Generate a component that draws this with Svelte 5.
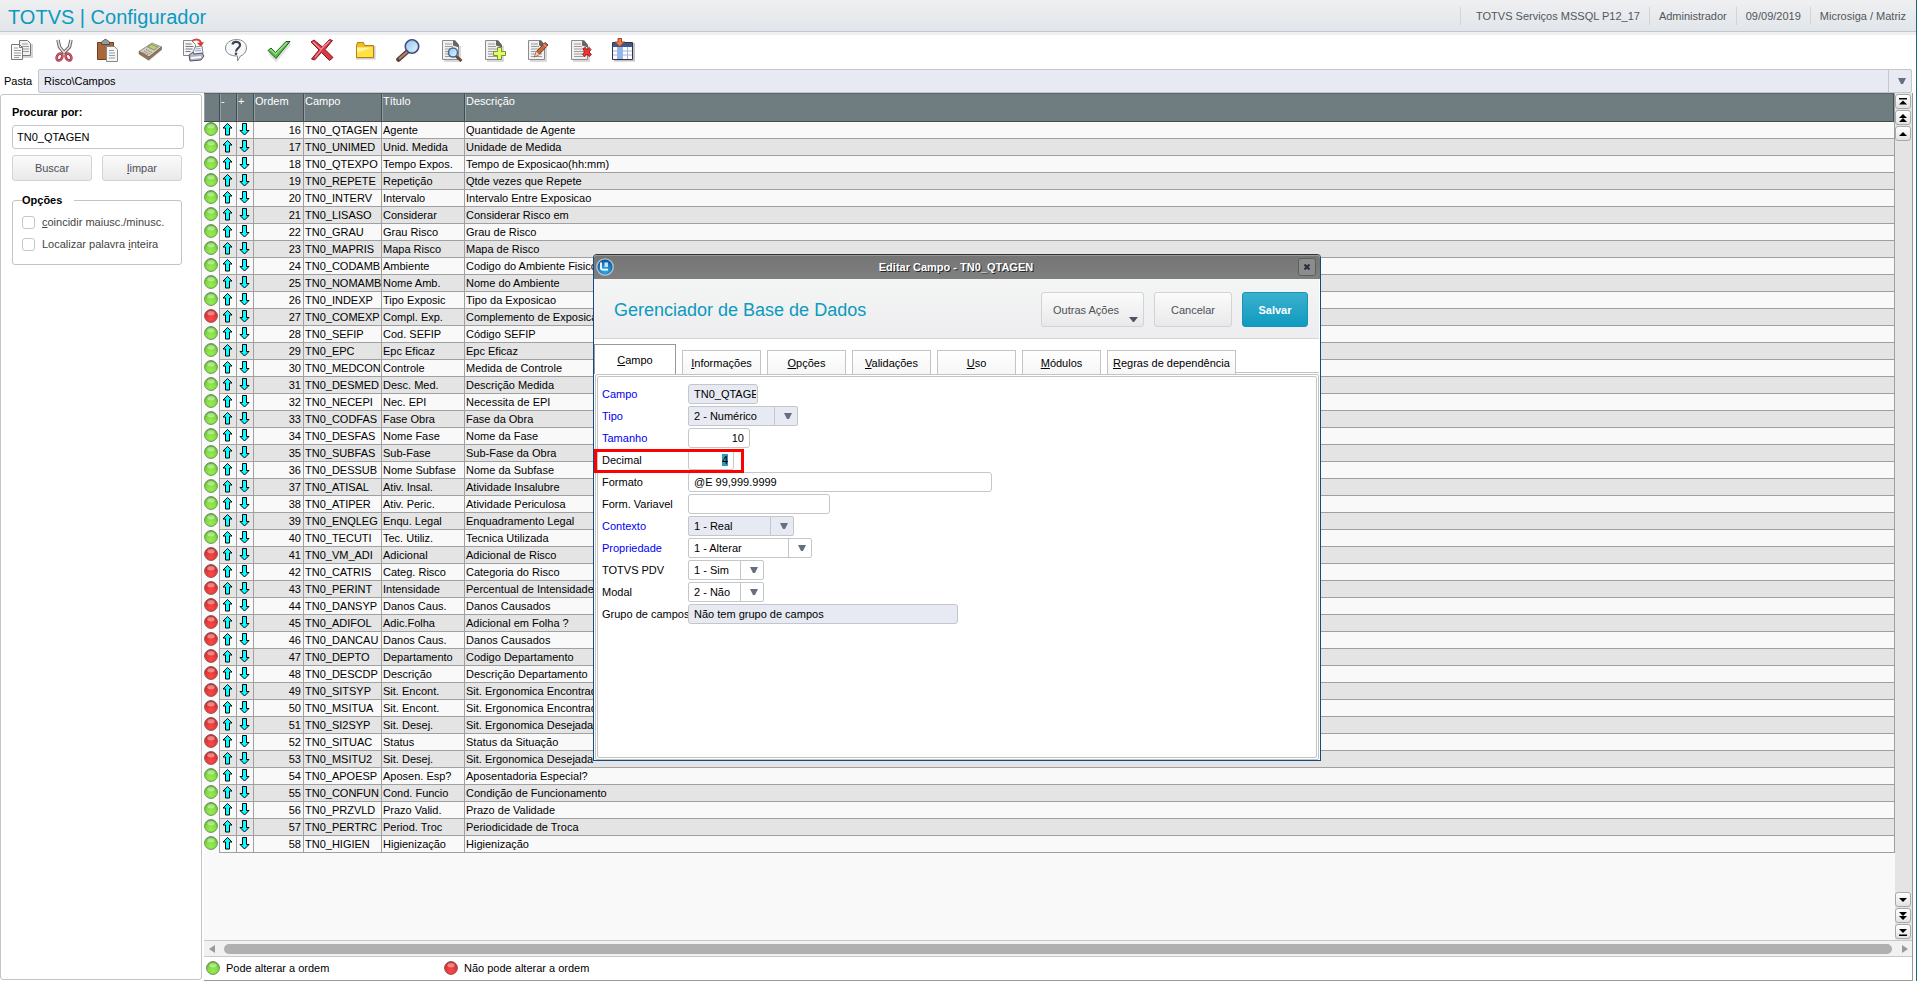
<script lang="ts">
  type Field = {
    id: string;
    label: string;
    value: string;
    width: number;
    kind?: 'text' | 'select';
    required?: boolean;
    locked?: boolean;
    numeric?: boolean;
    marked?: boolean;
  };

  const session = ['TOTVS Serviços MSSQL P12_17', 'Administrador', '09/09/2019', 'Microsiga / Matriz'];

  const tools = [
    ['copy', 'Copiar'],
    ['cut', 'Recortar'],
    ['paste', 'Colar'],
    ['calc', 'Calculadora'],
    ['print', 'Imprimir'],
    ['help', 'Ajuda'],
    ['ok', 'Confirmar'],
    ['cancel', 'Cancelar'],
    ['folder', 'Abrir'],
    ['search', 'Pesquisar'],
    ['view', 'Visualizar'],
    ['add', 'Incluir'],
    ['edit', 'Editar'],
    ['remove', 'Excluir'],
    ['columns', 'Colunas'],
  ];

  // campo | título | descrição, numbered from 16
  const rows = `TN0_QTAGEN|Agente|Quantidade de Agente
TN0_UNIMED|Unid. Medida|Unidade de Medida
TN0_QTEXPO|Tempo Expos.|Tempo de Exposicao(hh:mm)
TN0_REPETE|Repetição|Qtde vezes que Repete
TN0_INTERV|Intervalo|Intervalo Entre Exposicao
TN0_LISASO|Considerar|Considerar Risco em
TN0_GRAU|Grau Risco|Grau de Risco
TN0_MAPRIS|Mapa Risco|Mapa de Risco
TN0_CODAMB|Ambiente|Codigo do Ambiente Fisico
TN0_NOMAMB|Nome Amb.|Nome do Ambiente
TN0_INDEXP|Tipo Exposic|Tipo da Exposicao
TN0_COMEXP|Compl. Exp.|Complemento de Exposicao
TN0_SEFIP|Cod. SEFIP|Código SEFIP
TN0_EPC|Epc Eficaz|Epc Eficaz
TN0_MEDCON|Controle|Medida de Controle
TN0_DESMED|Desc. Med.|Descrição Medida
TN0_NECEPI|Nec. EPI|Necessita de EPI
TN0_CODFAS|Fase Obra|Fase da Obra
TN0_DESFAS|Nome Fase|Nome da Fase
TN0_SUBFAS|Sub-Fase|Sub-Fase da Obra
TN0_DESSUB|Nome Subfase|Nome da Subfase
TN0_ATISAL|Ativ. Insal.|Atividade Insalubre
TN0_ATIPER|Ativ. Peric.|Atividade Periculosa
TN0_ENQLEG|Enqu. Legal|Enquadramento Legal
TN0_TECUTI|Tec. Utiliz.|Tecnica Utilizada
TN0_VM_ADI|Adicional|Adicional de Risco
TN0_CATRIS|Categ. Risco|Categoria do Risco
TN0_PERINT|Intensidade|Percentual de Intensidade
TN0_DANSYP|Danos Caus.|Danos Causados
TN0_ADIFOL|Adic.Folha|Adicional em Folha ?
TN0_DANCAU|Danos Caus.|Danos Causados
TN0_DEPTO|Departamento|Codigo Departamento
TN0_DESCDP|Descrição|Descrição Departamento
TN0_SITSYP|Sit. Encont.|Sit. Ergonomica Encontrad
TN0_MSITUA|Sit. Encont.|Sit. Ergonomica Encontrad
TN0_SI2SYP|Sit. Desej.|Sit. Ergonomica Desejada
TN0_SITUAC|Status|Status da Situação
TN0_MSITU2|Sit. Desej.|Sit. Ergonomica Desejada
TN0_APOESP|Aposen. Esp?|Aposentadoria Especial?
TN0_CONFUN|Cond. Funcio|Condição de Funcionamento
TN0_PRZVLD|Prazo Valid.|Prazo de Validade
TN0_PERTRC|Period. Troc|Periodicidade de Troca
TN0_HIGIEN|Higienização|Higienização`
    .split('\n')
    .map((line, i) => {
      const [campo, titulo, descricao] = line.split('|');
      const ordem = i + 16;
      return { ordem, campo, titulo, descricao, locked: ordem === 27 || (ordem >= 41 && ordem <= 53) };
    });

  const tabs = ['Campo', 'Informações', 'Opções', 'Validações', 'Uso', 'Módulos', 'Regras de dependência'];

  const fields: Field[] = [
    { id: 'campo', label: 'Campo', value: 'TN0_QTAGEN', width: 70, required: true, locked: true },
    { id: 'tipo', label: 'Tipo', value: '2 - Numérico', width: 110, kind: 'select', required: true, locked: true },
    { id: 'tamanho', label: 'Tamanho', value: '10', width: 62, required: true, numeric: true },
    { id: 'decimal', label: 'Decimal', value: '4', width: 46, numeric: true, marked: true },
    { id: 'formato', label: 'Formato', value: '@E 99,999.9999', width: 304 },
    { id: 'variavel', label: 'Form. Variavel', value: '', width: 142 },
    { id: 'contexto', label: 'Contexto', value: '1 - Real', width: 106, kind: 'select', required: true, locked: true },
    { id: 'propriedade', label: 'Propriedade', value: '1 - Alterar', width: 124, kind: 'select', required: true },
    { id: 'pdv', label: 'TOTVS PDV', value: '1 - Sim', width: 76, kind: 'select' },
    { id: 'modal', label: 'Modal', value: '2 - Não', width: 76, kind: 'select' },
    { id: 'grupo', label: 'Grupo de campos', value: 'Não tem grupo de campos', width: 270, locked: true },
  ];

  let activeTab = $state('Campo');
  let query = $state('TN0_QTAGEN');

  $effect(() => {
    const input = document.getElementById('decimal') as HTMLInputElement | null;
    input?.focus({ preventScroll: true });
    input?.select();
  });
</script>

{#snippet ball(red: boolean)}
  <svg class="ball" viewBox="0 0 14 14" aria-hidden="true">
    <circle cx="7" cy="7" r="6.4" fill={red ? 'url(#ball-red)' : 'url(#ball-green)'} stroke={red ? '#8d5555' : '#6f8f63'} stroke-width="1" />
    <ellipse cx="7" cy="4.2" rx="3.6" ry="2.2" fill="#fff" opacity=".4" />
  </svg>
{/snippet}

{#snippet sheet()}
  <path d="M5 23h16V8" stroke="#999" stroke-width="1.500" opacity=".5" />
  <path d="M3.500 2.500h12l4 4V21.500h-16z" fill="#f1f1f1" stroke="#8c8c8c" />
  <path d="M14 2.500h2.500l3.500 5v2l-6-2z" fill="#666" />
  <path d="M6 6h7M6 8.500h8M6 11h11M6 13.500h11M6 16h11M6 18.500h11" stroke="#9c9c9c" />
{/snippet}

{#snippet arrow()}
  <svg class="arrow" viewBox="0 0 8 6" aria-hidden="true"><path d="M0 0h8L5 6H3z" fill="#666f80" /></svg>
{/snippet}

<svg class="defs" aria-hidden="true">
  <defs>
    <radialGradient id="ball-green" cx=".5" cy=".75" r=".75">
      <stop offset="0" stop-color="#97ee52" /><stop offset=".6" stop-color="#7edb3c" /><stop offset="1" stop-color="#5aa935" />
    </radialGradient>
    <radialGradient id="ball-red" cx=".5" cy=".75" r=".75">
      <stop offset="0" stop-color="#fb4a48" /><stop offset=".6" stop-color="#e63434" /><stop offset="1" stop-color="#a92c2c" />
    </radialGradient>
    <linearGradient id="lens" x2="1" y2="1">
      <stop offset="0" stop-color="#8fc4ea" /><stop offset="1" stop-color="#eaf8ff" />
    </linearGradient>
    <radialGradient id="brand" cx=".5" cy=".7" r=".7">
      <stop offset="0" stop-color="#33b6ee" /><stop offset="1" stop-color="#0a4a92" />
    </radialGradient>
  </defs>
</svg>

<div class="app">
  <header class="banner">
    <h1>TOTVS | Configurador</h1>
    <ul>
      {#each session as item (item)}<li>{item}</li>{/each}
    </ul>
  </header>

  <nav class="toolbar" aria-label="Ferramentas">
    {#each tools as [name, title] (name)}
      <button type="button" aria-label={title}>
        <svg viewBox="0 0 24 24" fill="none" aria-hidden="true">
          {#if name === 'copy'}
            <path d="M11 19h12V6" stroke="#aaa" stroke-width="2" opacity=".5" />
            <path d="M10.500 2.500h8l3 3v12h-11z" fill="#f2f2f2" stroke="#777" />
            <path d="M13 6h6M13 8.500h7M13 11h7M13 13.500h7" stroke="#9a9a9a" />
            <path d="M2.500 6.500h8l3 3v12h-11z" fill="#fafafa" stroke="#777" />
            <path d="M10.500 6.500v3h3" stroke="#777" />
            <path d="M5 10h4M5 12.500h7M5 15h7M5 17.500h7M5 19.500h5" stroke="#9a9a9a" />
          {:else if name === 'cut'}
            <path d="M6 2l1.500 7 5 6M19 2l-1.500 7-6 6" stroke="#666" stroke-width="3.500" stroke-linejoin="round" />
            <path d="M6 2l1.500 7 5 6M19 2l-1.500 7-6 6" stroke="#e3e3e3" stroke-width="1.500" />
            <ellipse cx="7.500" cy="19" rx="2.600" ry="3.700" transform="rotate(28 7.500 19)" stroke="#9a3040" stroke-width="2.600" />
            <ellipse cx="16.500" cy="19" rx="2.600" ry="3.700" transform="rotate(-28 16.500 19)" stroke="#9a3040" stroke-width="2.600" />
            <ellipse cx="7.500" cy="19" rx="2.600" ry="3.700" transform="rotate(28 7.500 19)" stroke="#d0606f" stroke-width="1.200" />
            <ellipse cx="16.500" cy="19" rx="2.600" ry="3.700" transform="rotate(-28 16.500 19)" stroke="#d0606f" stroke-width="1.200" />
          {:else if name === 'paste'}
            <path d="M2.500 4.500h16v17h-16z" fill="#a9673b" stroke="#6e3d20" />
            <path d="M6.500 6.500V4l2-1.500c1-1.500 3-1.500 4 0l2 1.500v2.500z" fill="#999" stroke="#4e4e4e" />
            <path d="M11.500 8.500h8l3 3v12h-11z" fill="#f6f6f6" stroke="#888" />
            <path d="M14 12.500h5M14 15h6M14 17.500h6M14 20h6" stroke="#8fa0aa" />
          {:else if name === 'calc'}
            <path d="M2 16.500l9 6.500 13-11v-2z" fill="#aaa" opacity=".5" />
            <path d="M1 13.500L14 5l9.500 4L11 19z" fill="#d3cdc2" stroke="#857b70" stroke-width=".8" />
            <path d="M1 13.500L11 19l12.500-10v2.500L10.500 22 1 16z" fill="#94765a" stroke="#6c5440" stroke-width=".5" />
            <path d="M13.500 6.500l6.500 2.500-4 3-6.500-3z" fill="#b9cf72" stroke="#70804a" stroke-width=".7" />
            <path d="M8 11.500l6 3M6 13l6 3M4.200 14.200L10 17" stroke="#8b8075" stroke-dasharray="1.500 1" />
          {:else if name === 'print'}
            <path d="M2.500 2.500h8l4 4v11h-12z" fill="#f6f6f6" stroke="#888" />
            <path d="M4.500 6h6M4.500 8.500h8M4.500 11h7M4.500 13.500h5" stroke="#777" />
            <path d="M11 3c5-3 9-1 9 3" stroke="#d5443d" stroke-width="2" /><path d="M16 5l7-1-3 5z" fill="#e23a33" />
            <path d="M11 17l3-8 7-1 1 8z" fill="#f6f9ff" stroke="#888" />
            <path d="M8 17l4-3 1 2 8-1 2 3-3 4-11 1z" fill="#b3b3c1" stroke="#535366" />
            <path d="M10 20l10-1" stroke="#f8f8ff" stroke-width="2" /><path d="M14.500 11l5-.5M14 13l6-.5" stroke="#91a5ca" />
          {:else if name === 'help'}
            <path d="M12.500 1.500c6 0 10 3.500 10 8.500 0 4-3 7-6 8l-3 5v-5c-7 0-12-2.500-12-8 0-5 5-8.500 11-8.500z" fill="#f7f8fa" stroke="#888" />
            <path d="M8.500 6.500C9 2.700 16.500 3 16 7.500c-.3 2.500-4 2.800-4 6" stroke="#39404c" stroke-width="2.200" /><circle cx="12" cy="15.800" r="1.300" fill="#39404c" />
          {:else if name === 'ok'}
            <path d="M3 14.500l6 6L22.500 5" stroke="#aaa" stroke-width="5" opacity=".35" />
            <path d="M1 12.500l3-2.500 4.500 4.500L19 3.500h4L9 20.500z" fill="#55bc44" stroke="#205f20" stroke-linejoin="round" />
            <path d="M3 12.500l1-.8 4.500 4.500L20 4.500" stroke="#a3e294" stroke-width="1.200" />
          {:else if name === 'cancel'}
            <path d="M1 4l3-2 8.500 7L19.500 1.500l3 1L15 11.500l8 8-3.500 3-8-8-7 7.500-3-1 7.500-9z" fill="#d93843" stroke="#811721" stroke-linejoin="round" />
            <path d="M3 4l8 7.500 8.500-8.500M5 19.500l6-7.500" stroke="#f6929a" stroke-width="1.200" />
          {:else if name === 'folder'}
            <path d="M3 20.500h18.500V8" stroke="#999" opacity=".5" stroke-width="2" />
            <path d="M3.500 7.500l1-3h6l1 3h9v12h-17z" fill="#f1bd2b" stroke="#b57c0f" />
            <path d="M4 9.500h16v9.500H4z" fill="#ffe343" /><path d="M4 9.500h16l-16 5z" fill="#fff59a" />
          {:else if name === 'search'}
            <path d="M2.500 21.500L12 13" stroke="#5b4038" stroke-width="4.500" stroke-linecap="round" />
            <path d="M3 21l8.500-7.500" stroke="#b58273" stroke-width="1.800" />
            <circle cx="16" cy="8.500" r="6.500" fill="url(#lens)" stroke="#447" stroke-width="2" /><circle cx="16" cy="8.500" r="5.600" stroke="#9fd1f7" />
          {:else if name === 'columns'}
            <path d="M3 22.500h20V5" stroke="#999" stroke-width="2" opacity=".6" />
            <path d="M1.500 4.500h20v17h-20z" fill="#fdfdff" stroke="#334" />
            <path d="M2 5h19v4H2z" fill="#3b588f" /><path d="M7 9h4.500v12H7z" fill="#87b7f7" />
            <path d="M2 13h19M2 17h19M6.500 9v12M11.500 9v12M16.500 9v12" stroke="#a4b6d8" />
            <path d="M7 .500h3.500v3.500h3L8.800 8.500 4 4h3z" fill="#f07c4b" stroke="#a34420" />
          {:else}
            {@render sheet()}
            {#if name === 'view'}
              <path d="M17 18l5.500 5" stroke="#6a4a40" stroke-width="3" /><circle cx="14" cy="14.500" r="4.500" fill="url(#lens)" stroke="#4b6690" stroke-width="1.500" />
            {:else if name === 'add'}
              <path d="M15.500 9.500h4v4h4v4h-4v4h-4v-4h-4v-4h4z" fill="#e5fb61" stroke="#719434" />
            {:else if name === 'edit'}
              <path d="M9.500 19l2-5.500L20 4.500l3 2.500-9 9.500z" fill="#cf6639" stroke="#6a3320" /><path d="M9.500 19l2-5.500 2.500 3z" fill="#ead3ac" /><path d="M18.500 6l3 3" stroke="#f2b08b" />
            {:else}
              <path d="M15 10.500l2.500-1 1.500 2.500 2-2.500 2 2-2 2.500 2.500 2.500-2.500 2-2-2.500-2 2.500-2.500-2 2-2.500z" fill="#f03434" stroke="#a41c1c" />
            {/if}
          {/if}
        </svg>
      </button>
    {/each}
  </nav>

  <div class="folder">
    <label for="pasta">Pasta</label>
    <div class="combo locked path">
      <select id="pasta"><option>Risco\Campos</option></select>
      {@render arrow()}
    </div>
  </div>

  <main>
    <aside>
      <form class="find">
        <label class="strong" for="busca">Procurar por:</label>
        <input id="busca" type="text" bind:value={query} />
        <div class="pair">
          <button type="button" class="btn">Buscar</button>
          <button type="button" class="btn"><u>l</u>impar</button>
        </div>
        <fieldset>
          <legend>Opções</legend>
          <label class="check"><input type="checkbox" /><span><u>c</u>oincidir maiusc./minusc.</span></label>
          <label class="check"><input type="checkbox" /><span>Localizar palavra <u>i</u>nteira</span></label>
        </fieldset>
      </form>
    </aside>

    <section class="browse">
      <div class="view">
        <div class="rows">
          <table>
            <colgroup>
              <col class="c-status" /><col class="c-move" /><col class="c-move" /><col class="c-order" /><col class="c-field" /><col class="c-title" /><col />
            </colgroup>
            <thead>
              <tr><th></th><th>-</th><th>+</th><th>Ordem</th><th>Campo</th><th>Título</th><th>Descrição</th></tr>
            </thead>
            <tbody>
              {#each rows as r (r.ordem)}
                <tr>
                  <td class="status">{@render ball(r.locked)}</td>
                  <td class="move">
                    <svg viewBox="0 0 11 13" aria-hidden="true"><path d="M5.500.500l4.500 4.500H7.500v7h-4V5H1z" fill="#0ff" stroke="#000" /></svg>
                  </td>
                  <td class="move">
                    <svg viewBox="0 0 11 13" aria-hidden="true"><path d="M5.500 12L10 7.500H7.500v-7h-4v7H1z" fill="#0ff" stroke="#000" /></svg>
                  </td>
                  <td class="num">{r.ordem}</td>
                  <td>{r.campo}</td>
                  <td>{r.titulo}</td>
                  <td>{r.descricao}</td>
                </tr>
              {/each}
            </tbody>
          </table>
        </div>
        <div class="vbar">
          <button type="button" aria-label="Primeiro"><svg viewBox="0 0 8 8"><path d="M0 0h8v1.500H0zM4 2.500l4 4H0z" /></svg></button>
          <button type="button" aria-label="Página anterior"><svg viewBox="0 0 8 8"><path d="M4 0l4 4H0zM4 4l4 4H0z" /></svg></button>
          <button type="button" aria-label="Linha anterior"><svg viewBox="0 0 8 8"><path d="M4 2l4 4H0z" /></svg></button>
          <span class="track"></span>
          <button type="button" aria-label="Próxima linha"><svg viewBox="0 0 8 8"><path d="M4 6l4-4H0z" /></svg></button>
          <button type="button" aria-label="Próxima página"><svg viewBox="0 0 8 8"><path d="M4 4l4-4H0zM4 8l4-4H0z" /></svg></button>
          <button type="button" aria-label="Último"><svg viewBox="0 0 8 8"><path d="M4 5l4-4H0zM0 6.500h8V8H0z" /></svg></button>
        </div>
      </div>
      <div class="hbar">
        <button type="button" aria-label="Esquerda"><svg viewBox="0 0 6 8"><path d="M6 0v8L0 4z" /></svg></button>
        <span class="thumb"></span>
        <button type="button" aria-label="Direita"><svg viewBox="0 0 6 8"><path d="M0 0v8l6-4z" /></svg></button>
      </div>
      <footer>
        <span>{@render ball(false)}Pode alterar a ordem</span>
        <span>{@render ball(true)}Não pode alterar a ordem</span>
      </footer>
    </section>
  </main>

  <div class="dialog" role="dialog" aria-labelledby="dialog-title">
    <div class="titlebar">
      <svg class="brand" viewBox="0 0 18 18" aria-hidden="true">
        <circle cx="9" cy="9" r="8.200" fill="url(#brand)" stroke="#b9c4ce" stroke-width="1.300" />
        <path d="M5 4.500v5.500c0 1 .6 1.600 1.600 1.600H12" fill="none" stroke="#fff" stroke-width="1.800" />
        <path d="M8.500 4.500h3.500v4.500H8.500z" fill="#bfe6fb" />
      </svg>
      <h2 id="dialog-title">Editar Campo - TN0_QTAGEN</h2>
      <button type="button" class="close" aria-label="Fechar">
        <svg viewBox="0 0 6 6"><path d="M.5.5l5 5M5.500.500l-5 5" stroke="#232c48" stroke-width="2" /></svg>
      </button>
    </div>
    <div class="heading">
      <h3>Gerenciador de Base de Dados</h3>
      <button type="button" class="btn menu">Outras Ações<svg viewBox="0 0 9 5" aria-hidden="true"><path d="M0 0h9L5 5H4z" fill="#4d5464" /></svg></button>
      <button type="button" class="btn">Cancelar</button>
      <button type="button" class="btn primary">Salvar</button>
    </div>
    <div class="tabs" role="tablist">
      {#each tabs as tab (tab)}
        <button type="button" role="tab" aria-selected={tab === activeTab} class:active={tab === activeTab} onclick={() => (activeTab = tab)}>
          <u>{tab[0]}</u>{tab.slice(1)}
        </button>
      {/each}
    </div>
    <div class="sheet">
      <form>
        {#each fields as f (f.id)}
          <div class="field" class:marked={f.marked}>
            <label for={f.id} class:required={f.required}>{f.label}</label>
            {#if f.kind === 'select'}
              <div class="combo" class:locked={f.locked} style="width:{f.width}px">
                <select id={f.id} disabled={f.locked}><option>{f.value}</option></select>
                {@render arrow()}
              </div>
            {:else}
              <input id={f.id} type="text" value={f.value} readonly={f.locked} class:locked={f.locked} class:numeric={f.numeric} style="width:{f.width}px" />
            {/if}
          </div>
        {/each}
      </form>
    </div>
  </div>
</div>

<style>
  :global(body) {
    background: #fff;
  }
  .app,
  .app *,
  .app *::after {
    box-sizing: border-box;
  }
  .app {
    position: relative;
    display: flex;
    flex-direction: column;
    min-height: 100vh;
    border-right: 1px solid #17697f;
    font: 11px/14px 'Liberation Sans', Arial, sans-serif;
    color: #000;
  }
  .app button,
  .app input,
  .app select {
    font: inherit;
    color: inherit;
    margin: 0;
  }
  .app svg {
    display: block;
    flex: none;
  }
  .defs {
    position: absolute;
    width: 0;
    height: 0;
  }
  h1,
  h2,
  h3,
  ul {
    margin: 0;
    padding: 0;
    font-weight: normal;
  }
  .banner {
    display: flex;
    align-items: center;
    justify-content: space-between;
    height: 35px;
    padding: 0 10px 0 8px;
    border-bottom: 3px solid #f0f0f2;
    background: linear-gradient(#efeff1, #e1e6ea);
    box-shadow: inset 0 -1px #c2c6ce;
  }
  h1 {
    padding-top: 2px;
    font-size: 20px;
    line-height: 28px;
    color: #0c9abe;
  }
  ul {
    display: flex;
    list-style: none;
    color: #53565c;
  }
  li {
    padding: 2px 9px;
    border-left: 1px solid #d2d5d8;
  }
  li:first-child {
    padding-left: 15px;
  }
  li:last-child {
    padding-right: 0;
  }
  .toolbar {
    display: flex;
    gap: 19px;
    height: 34px;
    padding: 3px 9px;
  }
  .toolbar button {
    width: 24px;
    height: 24px;
    padding: 0;
    border: 0;
    background: none;
  }
  .toolbar svg {
    width: 24px;
    height: 24px;
  }
  .folder {
    display: flex;
    align-items: center;
    height: 24px;
    padding-right: 4px;
  }
  .folder label {
    width: 38px;
    padding-left: 4px;
  }

  .combo {
    display: flex;
    align-items: center;
    height: 20px;
    border: 1px solid #c4c6ca;
    border-radius: 2px;
    background: #fff;
  }
  .combo.path {
    flex: 1;
    height: 24px;
  }
  .combo select {
    flex: 1;
    align-self: stretch;
    min-width: 0;
    padding: 0 5px;
    border: 0;
    border-right: 1px solid #c4c6ca;
    border-radius: 0;
    outline: none;
    appearance: none;
    background: none;
    opacity: 1;
  }
  .arrow {
    width: 8px;
    height: 6px;
    margin: 0 5px 0 9px;
  }
  .app .combo.locked,
  .app input.locked {
    background: #e7eaf2;
  }

  main {
    display: flex;
    flex: 1;
    gap: 2px;
    padding-right: 3px;
  }
  aside {
    width: 202px;
    margin: 1px 0;
    padding: 10px 17px 0 11px;
    border: 1px solid #c4c4c4;
    border-radius: 3px;
  }
  .find {
    display: flex;
    flex-direction: column;
    color: #444;
  }
  .strong,
  legend {
    font-weight: bold;
    color: #000;
  }
  .app input {
    border: 1px solid #c4c6ca;
    border-radius: 3px;
    outline: none;
    background: #fff;
    color: #000;
    padding: 0 1px 0 5px;
  }
  .find #busca {
    height: 24px;
    margin: 6px 0 6px;
    width: 100%;
    padding: 0 4px;
  }
  .pair {
    display: flex;
    gap: 10px;
    margin-right: 2px;
  }
  .pair .btn {
    flex: 1;
    height: 26px;
  }
  .btn {
    border: 1px solid #d3d3d5;
    border-radius: 3px;
    background: linear-gradient(#fbfbfb, #e9e9ea);
    padding: 0;
  }
  .app .btn {
    color: #4d5057;
  }
  fieldset {
    margin: 12px 2px 0 0;
    padding: 4px 9px 9px;
    border: 1px solid #c4c4c4;
    border-radius: 3px;
  }
  legend {
    padding: 0 12px 0 0;
  }
  .check {
    display: flex;
    align-items: center;
    gap: 7px;
    height: 22px;
  }
  .app .check input {
    appearance: none;
    width: 13px;
    height: 13px;
    padding: 0;
  }

  .browse {
    display: flex;
    flex: 1;
    flex-direction: column;
    min-width: 0;
    border-right: 1px solid #999;
    border-bottom: 1px solid #999;
  }
  .view {
    display: flex;
    flex: 1;
  }
  .rows {
    flex: 1;
    background: #f9f9f9;
  }
  table {
    width: 100%;
    table-layout: fixed;
    border-spacing: 0;
    border-right: 1px solid #a0a0a0;
  }
  .c-status {
    width: 16px;
  }
  .c-move {
    width: 17px;
  }
  .c-order {
    width: 50px;
  }
  .c-field {
    width: 78px;
  }
  .c-title {
    width: 83px;
  }
  th {
    height: 29px;
    padding: 0 0 0 1px;
    border-top: 1px solid #5b6467;
    border-right: 1px solid #454c4f;
    border-bottom: 1px solid #454c4f;
    background: #6f7d81;
    box-shadow: inset 1px 0 #92a0a4;
    color: #fff;
    font-weight: normal;
    text-align: left;
    vertical-align: top;
  }
  td {
    height: 17px;
    padding: 0 0 0 1px;
    border-right: 1px solid #a0a0a0;
    border-bottom: 1px solid #a0a0a0;
    white-space: nowrap;
    overflow: hidden;
  }
  td:last-child {
    border-right: 0;
  }
  tbody tr:nth-child(even) {
    background: #e4e4e4;
  }
  .num {
    padding-right: 2px;
    text-align: right;
  }
  .status {
    padding: 0;
    border-bottom: 0;
    background: #fafafa;
    vertical-align: top;
  }
  .move {
    padding: 1px 0 0 2px;
    vertical-align: top;
  }
  .move svg {
    width: 11px;
    height: 13px;
  }
  .ball {
    width: 14px;
    height: 14px;
  }

  .vbar {
    display: flex;
    flex-direction: column;
    gap: 1px;
    width: 17px;
    padding: 1px 1px 1px 0;
    background: #e4e4e4;
  }
  .track {
    flex: 1;
  }
  .vbar button {
    display: grid;
    place-items: center;
    width: 16px;
    height: 15px;
    padding: 0;
    border: 1px solid #a9a9a9;
    border-radius: 3px;
    background: linear-gradient(#fff, #e2e2e2);
  }
  .vbar svg {
    width: 8px;
    height: 8px;
  }
  .hbar {
    display: flex;
    align-items: center;
    gap: 5px;
    height: 17px;
    border: solid #c8c8c8;
    border-width: 1px 0;
    background: #f1f1f1;
  }
  .hbar button {
    display: grid;
    place-items: center;
    width: 15px;
    height: 15px;
    padding: 0;
    border: 0;
    background: none;
  }
  .hbar svg {
    width: 6px;
    height: 8px;
    fill: #999;
  }
  .thumb {
    flex: 1;
    height: 10px;
    border-radius: 5px;
    background: #b0b0b0;
  }
  footer {
    display: flex;
    align-items: center;
    height: 23px;
    padding: 0 0 2px 2px;
  }
  footer span {
    display: flex;
    align-items: center;
    gap: 6px;
    width: 238px;
  }

  .dialog {
    position: absolute;
    top: 254px;
    left: calc(50% - 365px);
    display: flex;
    flex-direction: column;
    width: 728px;
    height: 507px;
    border: 1px solid #174a7c;
    border-top-color: #333;
    border-radius: 4px 4px 0 0;
    background: #fff;
  }
  .titlebar {
    display: flex;
    align-items: center;
    height: 24px;
    padding: 0 4px 0 2px;
    border-radius: 3px 3px 0 0;
    background: linear-gradient(#757575, #7f7f7f);
    box-shadow: inset 0 1px #999;
  }
  .brand {
    width: 18px;
    height: 18px;
  }
  h2 {
    flex: 1;
    color: #fff;
    font-size: 11px;
    font-weight: bold;
    line-height: 14px;
    text-align: center;
    text-shadow: 1px 1px #222;
  }
  .close {
    display: grid;
    place-items: center;
    width: 18px;
    height: 18px;
    padding: 0;
    border: 1px solid #5e5e5e;
    border-radius: 3px;
    background: #8c8c8c;
  }
  .close svg {
    width: 6px;
    height: 6px;
  }
  .heading {
    display: flex;
    align-items: center;
    gap: 10px;
    height: 60px;
    margin-right: 1px;
    padding: 2px 11px 0 20px;
    border-bottom: 1px solid #d6d6d8;
    background: linear-gradient(#f4f5f5, #ededef);
  }
  h3 {
    flex: 1;
    color: #0c9abe;
    font-size: 18px;
    line-height: 24px;
  }
  .heading .btn {
    width: 78px;
    height: 35px;
  }
  .heading .menu {
    display: flex;
    align-items: center;
    gap: 10px;
    width: 103px;
    padding: 0 2px 0 11px;
  }
  .menu svg {
    width: 9px;
    height: 5px;
    margin: 20px 0 0;
  }
  .app .heading .primary {
    width: 66px;
    border-color: #1a93b4;
    background: linear-gradient(#3bb0ce, #0f9bc0);
    color: #fff;
    font-weight: bold;
  }
  .tabs {
    display: flex;
    align-items: flex-end;
    gap: 6px;
    height: 35px;
    margin-right: 1px;
  }
  .tabs::after {
    flex: 1;
    height: 2px;
    margin-left: -6px;
    border-top: 1px solid #c4c4c4;
    content: '';
  }
  .tabs button {
    min-width: 79px;
    height: 24px;
    padding: 0 5px;
    border: 1px solid #c4c4c4;
    border-bottom: 0;
    background: linear-gradient(#fff, #f6f6f6);
    white-space: nowrap;
  }
  .tabs .active {
    min-width: 82px;
    height: 30px;
    border-color: #999;
    background: #fff;
  }
  .sheet {
    flex: 1;
    margin: 0 1px;
    padding: 1px;
    border: 1px solid #c4c4c4;
    border-radius: 2px;
  }
  .sheet form {
    height: 100%;
    padding: 7px 4px;
    border: 1px solid #c4c4c4;
    border-radius: 2px;
  }
  .field {
    position: relative;
    display: flex;
    align-items: center;
    height: 22px;
    padding-bottom: 2px;
  }
  .field label {
    width: 86px;
    white-space: nowrap;
  }
  .field .required {
    color: #0000f0;
  }
  .field input {
    height: 20px;
  }
  .app .numeric {
    padding-right: 5px;
    text-align: right;
  }
  .field input::selection {
    background: #339ab3;
    color: #000;
  }
  .marked::after {
    position: absolute;
    z-index: 1;
    top: -1px;
    left: -8px;
    width: 150px;
    height: 24px;
    border: 3px solid #f00;
    content: '';
    pointer-events: none;
  }
</style>
